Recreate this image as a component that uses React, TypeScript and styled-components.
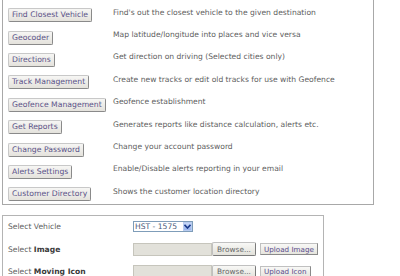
import React from 'react';
import styled, { createGlobalStyle } from 'styled-components';

const tools = [
  ['Find Closest Vehicle', "Find's out the closest vehicle to the given destination"],
  ['Geocoder', 'Map latitude/longitude into places and vice versa'],
  ['Directions', 'Get direction on driving (Selected cities only)'],
  ['Track Management', 'Create new tracks or edit old tracks for use with Geofence'],
  ['Geofence Management', 'Geofence establishment'],
  ['Get Reports', 'Generates reports like distance calculation, alerts etc.'],
  ['Change Password', 'Change your account password'],
  ['Alerts Settings', 'Enable/Disable alerts reporting in your email'],
  ['Customer Directory', 'Shows the customer location directory'],
];

function App() {
  return (
    <Page>
      <GlobalStyle />
      <ToolBox>
        {tools.map(([label, text]) => (
          <ToolRow key={label}>
            <div>
              <ToolButton>{label}</ToolButton>
            </div>
            <Desc>{text}</Desc>
          </ToolRow>
        ))}
      </ToolBox>
      <FormBox>
        <FormRow>
          <Label>Select Vehicle</Label>
          <Select>
            <span>HST - 1575</span>
            <Arrow>
              <svg width="7" height="5" viewBox="0 0 7 5">
                <path d="M0.5 0.8 L3.5 4 L6.5 0.8" fill="none" stroke="#1a3a8a" strokeWidth="1.6" />
              </svg>
            </Arrow>
          </Select>
        </FormRow>
        <FormRow>
          <Label>
            Select <b>Image</b>
          </Label>
          <FileField>
            <FileInput />
            <BrowseButton>Browse...</BrowseButton>
            <UploadButton>Upload Image</UploadButton>
          </FileField>
        </FormRow>
        <FormRow>
          <Label>
            Select <b>Moving Icon</b>
          </Label>
          <FileField>
            <FileInput />
            <BrowseButton>Browse...</BrowseButton>
            <UploadButton>Upload Icon</UploadButton>
          </FileField>
        </FormRow>
      </FormBox>
    </Page>
  );
}

const GlobalStyle = createGlobalStyle`
  html, body {
    margin: 0;
    padding: 0;
    background: #fff;
    overflow: hidden;
  }
  body {
    font-family: "DejaVu Sans", Verdana, sans-serif;
  }
`;

const Page = styled.div`
  width: 400px;
  height: 276px;
  overflow: hidden;
  padding-left: 2px;
`;

const ToolBox = styled.div`
  width: 372px;
  margin-top: -8px;
  border: 1px solid #a8a8a8;
  padding: 8px 0 1px 5px;
  box-sizing: border-box;
`;

const ToolRow = styled.div`
  display: grid;
  grid-template-columns: 105px 1fr;
  align-items: center;
  height: 22.4px;
`;

const ToolButton = styled.span`
  display: inline-block;
  height: 14px;
  line-height: 12px;
  box-sizing: border-box;
  padding: 0 3px;
  border: 1px solid #8a8a8a;
  border-top-color: #c8c8c8;
  border-left-color: #c8c8c8;
  border-radius: 2px;
  background: linear-gradient(#f6f6f4, #e4e2dc);
  color: #5a5288;
  font-size: 7.7px;
  white-space: nowrap;
`;

const Desc = styled.span`
  color: #606060;
  font-size: 7.6px;
  white-space: nowrap;
`;

const FormBox = styled.div`
  width: 322px;
  margin-top: 10px;
  border: 1px solid #b4b4b4;
  padding: 0 0 0 5px;
  height: 80px;
  box-sizing: border-box;
`;

const FormRow = styled.div`
  display: grid;
  grid-template-columns: 125px 1fr;
  align-items: center;
  height: 22.5px;
`;

const Label = styled.span`
  color: #606060;
  font-size: 7.6px;
  b {
    color: #3a3a3a;
  }
`;

const Select = styled.div`
  display: inline-flex;
  align-items: center;
  width: 60px;
  height: 11px;
  box-sizing: border-box;
  border: 1px solid #7f9db9;
  font-size: 7.6px;
  color: #4a5a7a;
  padding-left: 1px;
  justify-content: space-between;
`;

const Arrow = styled.span`
  display: flex;
  align-items: center;
  justify-content: center;
  width: 9px;
  height: 9px;
  background: linear-gradient(#c8d8f8, #98b4ec);
  border: 1px solid #b8ccf0;
  box-sizing: border-box;
`;

const FileField = styled.div`
  display: flex;
  align-items: center;
`;

const FileInput = styled.div`
  width: 79px;
  height: 13px;
  background: #e2e1da;
  border: 1px solid #c6c5bc;
  box-sizing: border-box;
`;

const BrowseButton = styled.span`
  width: 44px;
  height: 14px;
  box-sizing: border-box;
  display: flex;
  align-items: center;
  justify-content: center;
  border: 1px solid #7a7a7a;
  border-top-color: #c0c0c0;
  border-left-color: #c0c0c0;
  border-radius: 2px;
  background: linear-gradient(#f8f8f6, #e2e1da);
  color: #666;
  font-size: 7.4px;
`;

const UploadButton = styled.span`
  margin-left: 4px;
  height: 12px;
  box-sizing: border-box;
  display: flex;
  align-items: center;
  padding: 0 3px;
  border: 1px solid #8a8a8a;
  border-top-color: #c0c0c0;
  border-left-color: #c0c0c0;
  background: linear-gradient(#f8f8f6, #e6e5de);
  color: #5a4c8c;
  font-size: 7.2px;
`;

export default App;
